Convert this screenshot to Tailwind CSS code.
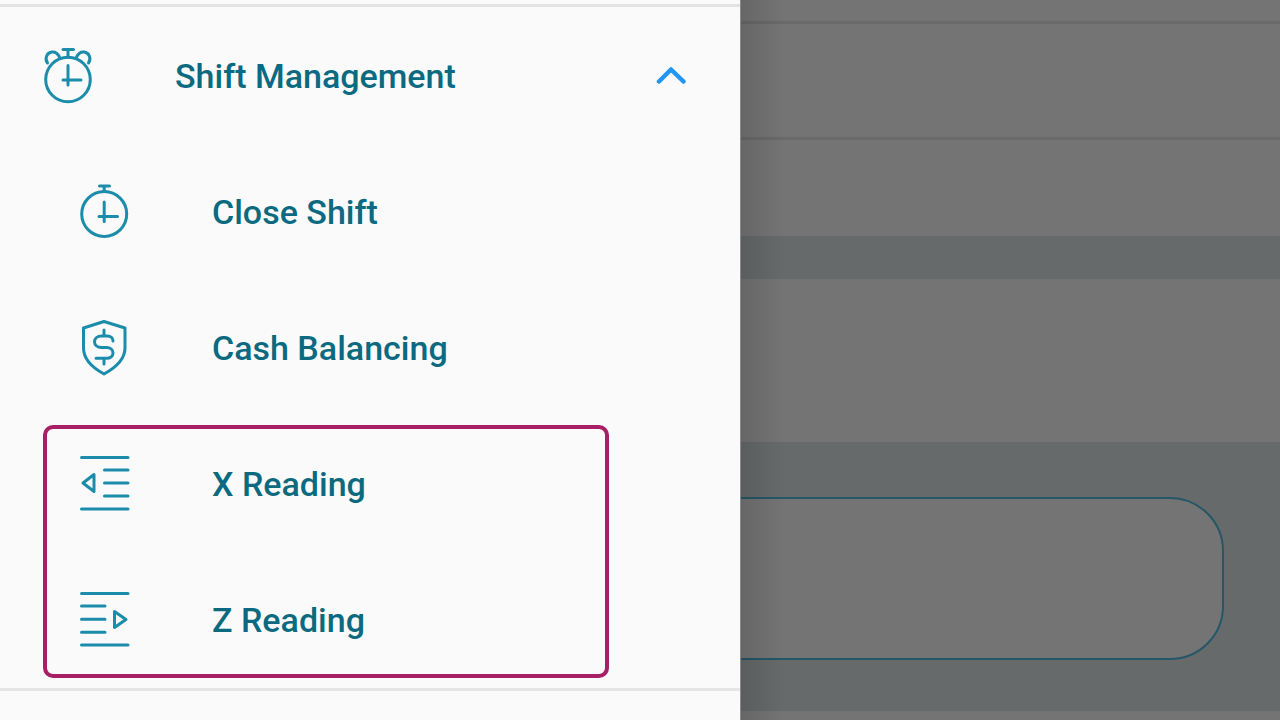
<!DOCTYPE html>
<html>
<head>
<meta charset="utf-8">
<script src="https://cdn.jsdelivr.net/npm/@tailwindcss/browser@4"></script>
</head>
<body class="m-0 overflow-hidden">
<div class="flex w-[1280px] h-[720px] overflow-hidden font-['Roboto',sans-serif] bg-[#747474]">
  <aside class="relative w-[740px] h-[720px] shrink-0 bg-[#fafafa] flex flex-col pt-[4px]">
    <div class="h-[3px] bg-[#e3e3e3] shrink-0"></div>
    <div class="h-[1px] shrink-0"></div>

    <div class="h-[136px] flex items-center pl-[43px] pr-[54px] shrink-0">
      <svg class="w-[50px] h-[56px] shrink-0" viewBox="0 0 50 56" fill="none" stroke="#1c8cab" stroke-width="3" stroke-linecap="round" stroke-linejoin="round">
        <circle cx="25" cy="31.500" r="22.300"/>
        <path d="M25 17.500v19.500M20 32h18M25 9v-7.500M20 1.500h10.500"/>
        <path d="M4.500 15c-3-4-1-10 4-11 3-.5 6 1 8 5M45.500 15c3-4 1-10-4-11-3-.5-6 1-8 5"/>
      </svg>
      <span class="ml-[82px] text-[34px] leading-none font-medium text-[#0b6a80] whitespace-nowrap">Shift Management</span>
      <svg class="ml-auto w-[32px] h-[20px]" viewBox="0 0 32 20" fill="none" stroke="#2196f3" stroke-width="4.500" stroke-linecap="round" stroke-linejoin="round"><path d="M5 15.500 17 3.500 29.500 15.500"/></svg>
    </div>

    <div class="h-[136px] flex items-center pl-[79px] shrink-0">
      <svg class="w-[50px] h-[56px] shrink-0" viewBox="0 0 50 56" fill="none" stroke="#1c8cab" stroke-width="3" stroke-linecap="round" stroke-linejoin="round">
        <circle cx="25.200" cy="30" r="22.500"/>
        <path d="M25.200 18v19.500M20 32.500h18.500M25.200 7v-5M20.500 2h10"/>
      </svg>
      <span class="ml-[83px] text-[34px] leading-none font-medium text-[#0b6a80] whitespace-nowrap">Close Shift</span>
    </div>

    <div class="h-[136px] flex items-center pl-[79px] shrink-0">
      <svg class="w-[50px] h-[56px] shrink-0" viewBox="0 0 50 56" fill="none" stroke="#1c8cab" stroke-width="3" stroke-linecap="round" stroke-linejoin="round">
        <path d="M25 1.500 46 8V28c0 12-10 20-21 26C14 48 4.500 40 4.500 28V8Z"/>
        <path d="M34 21c0-3-2.500-5-5.500-5h-6c-4 0-7 2.500-7 5.800s3 5.700 7 5.700h5c4 0 6.500 2.500 6.500 5.500s-2.500 5.300-6.500 5.300H17M25 10v6M25 38.500v5.500"/>
      </svg>
      <span class="ml-[83px] text-[34px] leading-none font-medium text-[#0b6a80] whitespace-nowrap">Cash Balancing</span>
    </div>

    <div class="h-[136px] flex items-center pl-[79px] shrink-0">
      <svg class="w-[52px] h-[56px] shrink-0" viewBox="0 0 52 56" fill="none" stroke="#1c8cab" stroke-width="3" stroke-linecap="round" stroke-linejoin="round">
        <path d="M2.500 1.500h46.500M25.500 14h23.500M25.500 27h23.500M25.500 40h23.500M2.500 53h46.500"/>
        <path d="M15 18.500 4 27 15 35.500Z"/>
      </svg>
      <span class="ml-[81px] text-[34px] leading-none font-medium text-[#0b6a80] whitespace-nowrap">X Reading</span>
    </div>

    <div class="h-[136px] flex items-center pl-[79px] shrink-0">
      <svg class="w-[52px] h-[56px] shrink-0" viewBox="0 0 52 56" fill="none" stroke="#1c8cab" stroke-width="3" stroke-linecap="round" stroke-linejoin="round">
        <path d="M2.500 1.500h46.500M2.500 14h23.500M2.500 27.300h23.500M2.500 40.300h23.500M2.500 53h46.500"/>
        <path d="M35.500 19.500 47 27.500 35.500 35.500Z"/>
      </svg>
      <span class="ml-[81px] text-[34px] leading-none font-medium text-[#0b6a80] whitespace-nowrap">Z Reading</span>
    </div>

    <div class="h-[3px] bg-[#e5e5e5] shrink-0"></div>

    <div class="absolute left-[43px] top-[425px] w-[566px] h-[253px] border-[4px] border-[#a81f66] rounded-[10px]"></div>
  </aside>

  <main class="relative flex-1 h-[720px] border-l-[1px] border-[#8a8a8a] overflow-hidden flex flex-col bg-[#747474]">
    <div class="h-[21px] shrink-0"></div>
    <div class="h-[3px] bg-[#696969] shrink-0"></div>
    <div class="h-[113px] shrink-0"></div>
    <div class="h-[3px] bg-[#696969] shrink-0"></div>
    <div class="h-[96px] shrink-0"></div>
    <div class="h-[43px] bg-[#666a6a] shrink-0"></div>
    <div class="h-[163px] shrink-0"></div>
    <div class="h-[269px] bg-[#666a6a] shrink-0 pt-[55px] pr-[56px]">
      <div class="h-[163px] ml-[-80px] bg-[#747474] border-[2.500px] border-[#255768] rounded-[54px]"></div>
    </div>
    <div class="flex-1"></div>
    <div class="absolute inset-y-0 left-0 w-[44px] bg-gradient-to-r from-black/12 to-transparent"></div>
  </main>
</div>
</body>
</html>
